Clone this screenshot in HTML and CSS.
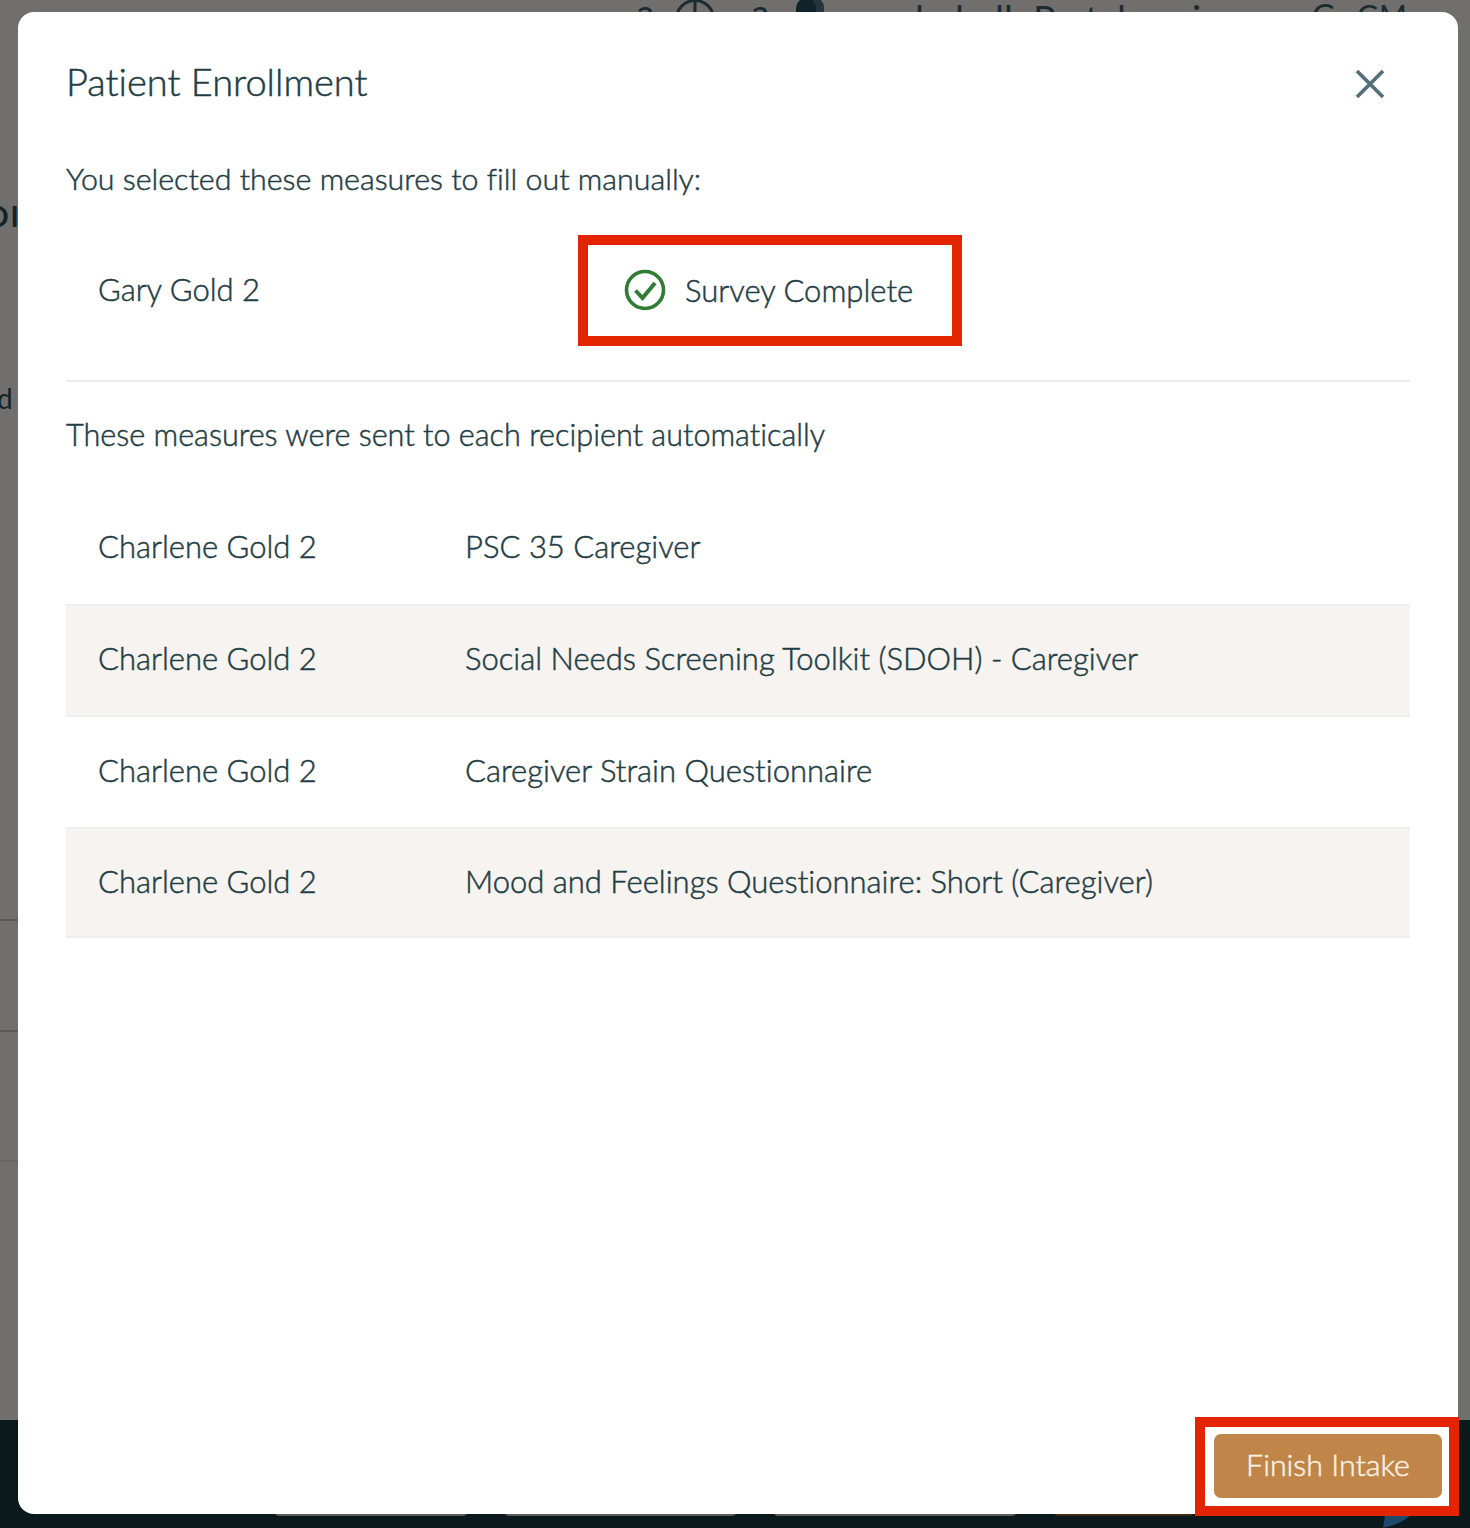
FILE: index.html
```html
<!DOCTYPE html>
<html lang="en">
<head>
    <meta charset="UTF-8">
    <title>Patient Enrollment</title>
    <link rel="stylesheet" href="styles.css">
</head>
<body>
<div class="page">
    <div class="page-main">
        <div class="top-bar">
            <span class="top-text top-a">a</span>
            <svg class="top-clock" width="42" height="42" viewBox="0 0 42 42"><circle cx="21" cy="21" r="18.5" fill="none" stroke="#1b2b30" stroke-width="3"/><path d="M21 3v19" stroke="#1b2b30" stroke-width="3" fill="none"/></svg>
            <span class="top-text top-b">a</span>
            <span class="top-blob blob-back"></span>
            <span class="top-blob"></span>
            <span class="top-text top-c">l</span>
            <span class="top-text top-d">l</span>
            <span class="top-text top-e">ll</span>
            <span class="top-text top-f">P</span>
            <span class="top-text top-g">t</span>
            <span class="top-text top-h">l</span>
            <span class="top-text top-i">i</span>
            <span class="top-text top-j">G</span>
            <span class="top-text top-k">GM</span>
        </div>
        <span class="side-text side-a">OI</span>
        <span class="side-text side-b">d</span>
        <div class="side-line line-a"></div>
        <div class="side-line line-b"></div>
        <div class="side-line line-c"></div>
    </div>
    <div class="page-footer">
        <div class="footer-btn btn-a"></div>
        <div class="footer-btn btn-b"></div>
        <div class="footer-btn btn-c"></div>
        <div class="footer-btn btn-d"></div>
        <svg class="footer-mark" width="27" height="12" viewBox="0 0 27 12"><path d="M2 0h25C20 6 10 10 0 12z" fill="#1c4a68"/></svg>
    </div>
</div>

<div class="modal">
    <div class="modal-header">
        <h1>Patient Enrollment</h1>
        <svg class="close-icon" width="30" height="30" viewBox="0 0 30 30"><path d="M2 2l26 26M28 2L2 28" fill="none" stroke="#567078" stroke-width="3.8"/></svg>
    </div>

    <p class="section-title">You selected these measures to fill out manually:</p>
    <div class="manual-row">
        <div class="manual-name">Gary Gold 2</div>
        <div class="status">
            <svg width="42" height="42" viewBox="0 0 42 42"><circle cx="21" cy="21" r="18.5" fill="none" stroke="#2e7d32" stroke-width="3.6"/><path d="M11.5 21.5l7 7.5 12.5-15" fill="none" stroke="#2e7d32" stroke-width="4"/></svg>
            <span>Survey Complete</span>
        </div>
    </div>
    <hr class="divider">

    <p class="section-title auto-title">These measures were sent to each recipient automatically</p>
    <div class="measures">
        <div class="measure"><div class="who">Charlene Gold 2</div><div>PSC 35 Caregiver</div></div>
        <div class="measure shaded"><div class="who">Charlene Gold 2</div><div>Social Needs Screening Toolkit (SDOH) - Caregiver</div></div>
        <div class="measure"><div class="who">Charlene Gold 2</div><div>Caregiver Strain Questionnaire</div></div>
        <div class="measure shaded"><div class="who">Charlene Gold 2</div><div>Mood and Feelings Questionnaire: Short (Caregiver)</div></div>
    </div>

    <div class="modal-footer">
        <button class="finish-btn">Finish Intake</button>
    </div>
</div>

<div class="callout callout-survey"></div>
<div class="callout callout-finish"></div>
</body>
</html>
```

FILE: styles.css
```css
html, body {
    margin: 0;
    padding: 0;
}
body {
    font-family: Lato, "Open Sans", sans-serif;
    font-weight: 300;
    font-variant-ligatures: none;
    color: #1f3d44;
    position: relative;
    width: 1470px;
    height: 1528px;
    overflow: hidden;
}
.page {
    display: flex;
    flex-direction: column;
    height: 1528px;
}
.page-main {
    flex: 1;
    background-color: #716f6e;
    position: relative;
    overflow: hidden;
}
.page-footer {
    height: 108px;
    background-color: #0b181c;
    display: flex;
    gap: 38px;
    padding-left: 275px;
    position: relative;
}
.footer-btn {
    height: 96px;
    background-color: #5c5c5c;
    border-radius: 0 0 4px 4px;
}
.btn-a { width: 192px; }
.btn-b { width: 231px; }
.btn-c { width: 242px; }
.btn-d {
    width: 140px;
    background-color: #3d2a17;
}
.footer-mark {
    position: absolute;
    left: 1383px;
    bottom: 0;
}
.top-bar {
    position: absolute;
    top: 0;
    left: 0;
    width: 100%;
    height: 40px;
}
.top-text {
    position: absolute;
    top: 0;
    font-size: 38px;
    font-weight: 400;
    line-height: 1;
    color: #1b2b30;
}
.top-a {
    left: 636px;
    top: -7px;
}
.top-b {
    left: 751px;
    top: -7px;
}
.top-c { left: 915px; }
.top-d { left: 955px; }
.top-e { left: 995px; }
.top-f { left: 1033px; }
.top-g { left: 1085px; }
.top-h { left: 1117px; }
.top-i { left: 1192px; }
.top-j {
    left: 1312px;
    font-size: 32px;
}
.top-k {
    left: 1357px;
    font-size: 30px;
}
.top-clock {
    position: absolute;
    left: 674px;
    top: -2px;
}
.top-blob {
    position: absolute;
    left: 796px;
    top: -2px;
    width: 20px;
    height: 24px;
    border-radius: 10px;
    background-color: #10242a;
}
.blob-back {
    left: 806px;
    width: 18px;
    background-color: #24363b;
}
.side-text {
    position: absolute;
    font-size: 28px;
    color: #10242a;
    white-space: nowrap;
}
.side-a {
    top: 199px;
    left: -14px;
    font-weight: 700;
    letter-spacing: 2px;
}
.side-b {
    top: 381px;
    left: -3px;
    font-weight: 400;
}
.side-line {
    position: absolute;
    left: 0;
    width: 18px;
    height: 2px;
    background-color: #5a5a5a;
}
.line-a { top: 919px; }
.line-b { top: 1030px; }
.line-c {
    top: 1160px;
    background-color: #666666;
}

/* the dialog sits over the page */
.modal {
    position: absolute;
    top: 12px;
    left: 18px;
    width: 1440px;
    height: 1502px;
    box-sizing: border-box;
    padding: 0 48px;
    background-color: #ffffff;
    border-radius: 16px;
    display: flex;
    flex-direction: column;
    -webkit-text-stroke: 0.5px;
}
.modal-header {
    display: flex;
    justify-content: space-between;
    align-items: center;
    height: 141px;
    padding-right: 25px;
}
h1 {
    font-size: 38px;
    font-weight: 300;
    margin: 0 0 3px;
}
.close-icon {
    margin-top: 3px;
}
.section-title {
    font-size: 30.4px;
    line-height: 50px;
    margin: 0;
}
.manual-row {
    display: flex;
    align-items: center;
    box-sizing: border-box;
    height: 177px;
    padding: 0 0 5px 32px;
    font-size: 31px;
}
.manual-name {
    width: 526px;
}
.status {
    display: flex;
    align-items: center;
    gap: 19px;
    margin-top: 2px;
}
.divider {
    border: none;
    height: 2px;
    margin: 0;
    background-color: #ededed;
}
.auto-title {
    margin-top: 28px;
    font-size: 30.6px;
}
.measures {
    margin-top: 32px;
}
.measure {
    display: flex;
    align-items: center;
    height: 112px;
    padding: 0 0 5px 32px;
    font-size: 31px;
    box-sizing: border-box;
}
.measure:nth-child(2) { height: 113px; }
.measure:nth-child(3) { height: 110px; }
.measure:nth-child(4) {
    height: 111px;
    padding-bottom: 3px;
}
.who {
    width: 367px;
}
.shaded {
    background-color: #f6f3f0;
    border-top: 2px solid #f0eeeb;
    border-bottom: 2px solid #f0eeeb;
}
.modal-footer {
    margin-top: auto;
    display: flex;
    justify-content: flex-end;
    padding-bottom: 16px;
    margin-right: -32px;
}
.finish-btn {
    width: 228px;
    height: 64px;
    border: none;
    border-radius: 7px;
    background-color: #bf8549;
    color: #fbf1e4;
    font-family: inherit;
    font-weight: 300;
    font-size: 30.4px;
    padding: 0 0 4px;
}

/* red annotation boxes drawn on top of the screenshot */
.callout {
    position: absolute;
    box-sizing: border-box;
    border: 10px solid #e22500;
}
.callout-survey {
    left: 578px;
    top: 235px;
    width: 384px;
    height: 111px;
}
.callout-finish {
    left: 1195px;
    top: 1417px;
    width: 264px;
    height: 99px;
}
```
